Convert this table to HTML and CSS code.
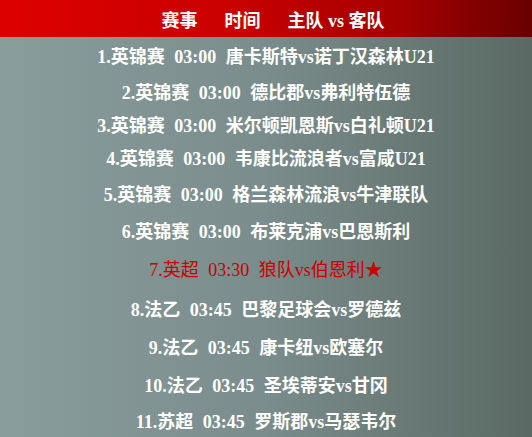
FILE: index.html
```html
<!DOCTYPE html>
<html lang="zh">
<head>
<meta charset="utf-8">
<title>赛事</title>
<link rel="stylesheet" href="styles.css">
</head>
<body>
<div class="board">
  <div class="head">
    <span>赛事</span><span>时间</span><span>主队 vs 客队</span>
  </div>
  <ul class="list">
    <li>1.英锦赛 03:00 唐卡斯特vs诺丁汉森林U21</li>
    <li>2.英锦赛 03:00 德比郡vs弗利特伍德</li>
    <li>3.英锦赛 03:00 米尔顿凯恩斯vs白礼顿U21</li>
    <li>4.英锦赛 03:00 韦康比流浪者vs富咸U21</li>
    <li>5.英锦赛 03:00 格兰森林流浪vs牛津联队</li>
    <li>6.英锦赛 03:00 布莱克浦vs巴恩斯利</li>
    <li class="hot">7.英超 03:30 狼队vs伯恩利★</li>
    <li>8.法乙 03:45 巴黎足球会vs罗德兹</li>
    <li>9.法乙 03:45 康卡纽vs欧塞尔</li>
    <li>10.法乙 03:45 圣埃蒂安vs甘冈</li>
    <li>11.苏超 03:45 罗斯郡vs马瑟韦尔</li>
  </ul>
</div>
</body>
</html>
```
FILE: styles.css
```css
html, body {
  margin: 0;
  padding: 0;
}
body {
  width: 532px;
  height: 437px;
  overflow: hidden;
  font-family: "Liberation Serif", "Noto Sans CJK SC", serif;
  background: linear-gradient(to right, #8a9d9d 0%, #7a8c8b 50%, #5a6963 100%);
}
.board {
  display: flex;
  flex-direction: column;
}
.head {
  height: 37px;
  display: flex;
  justify-content: center;
  align-items: center;
  gap: 27px;
  padding-left: 14px;
  color: #fff;
  font-weight: bold;
  font-size: 18px;
  background: linear-gradient(to right, #de0000 0%, #c80000 45%, #a50000 75%, #6a0000 100%);
}
.list {
  list-style: none;
  margin: 0;
  padding: 0;
}
.list li {
  display: flex;
  align-items: center;
  justify-content: center;
  height: 36px;
  color: #fff;
  font-size: 18px;
  font-weight: bold;
  word-spacing: 5px;
  white-space: pre;
}
.list li:nth-child(2) { height: 35px; }
.list li:nth-child(3) { height: 32px; }
.list li:nth-child(4) { height: 34px; }
.list li:nth-child(5) { height: 37px; }
.list li:nth-child(6) { height: 37px; }
.list li:nth-child(7) { height: 40px; }
.list li:nth-child(8) { height: 39px; }
.list li:nth-child(9) { height: 38px; }
.list li:nth-child(10) { height: 37px; }
.list li:nth-child(11) { height: 36px; }
.list li.hot {
  color: #cc0000;
  font-weight: normal;
}
```
